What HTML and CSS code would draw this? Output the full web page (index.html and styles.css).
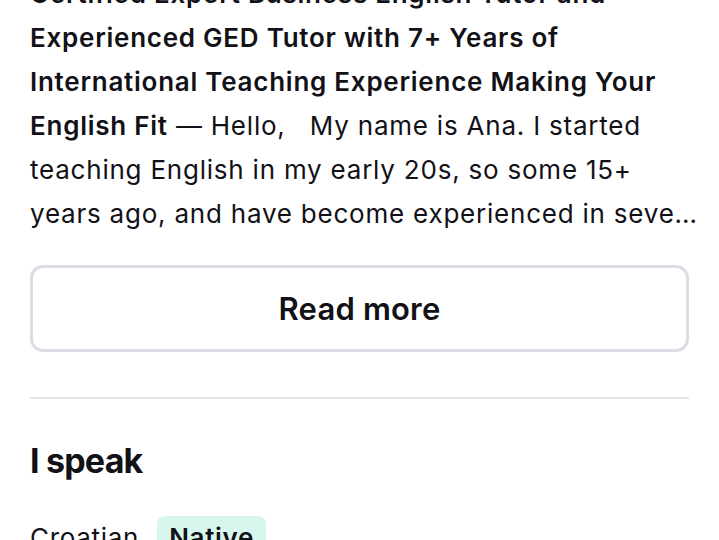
FILE: index.html
```html
<!DOCTYPE html>
<html lang="en">
<head>
<meta charset="utf-8">
<title>Tutor profile</title>
<link rel="stylesheet" href="styles.css">
</head>
<body>
<main class="profile">
  <section class="about">
    <p class="bio"><strong>Certified Expert Business English Tutor and Experienced GED Tutor with 7+ Years of International Teaching Experience Making Your English Fit</strong> — Hello,&nbsp;&nbsp; My name is Ana. I started teaching English in my early 20s, so some 15+ years ago, and have become experienced in seve…</p>
    <button class="read-more" type="button">Read more</button>
  </section>
  <hr class="divider">
  <section class="languages">
    <h2 class="section-title">I speak</h2>
    <ul class="lang-list">
      <li class="lang"><span class="lang-name">Croatian</span><span class="badge">Native</span></li>
    </ul>
  </section>
</main>
</body>
</html>
```
FILE: styles.css
```css
* { box-sizing: border-box; }
html, body { margin: 0; padding: 0; background: #ffffff; }
body {
  font-family: Inter, "Noto Sans", sans-serif;
  color: #121117;
  overflow: hidden;
}
.profile {
  padding: 0 30px;
  margin-top: -28px;
}
.about {
  display: flex;
  flex-direction: column;
}
.bio {
  margin: 0 -14px 0 0;
  font-size: 26px;
  line-height: 44px;
  letter-spacing: 0.78px;
  font-weight: 400;
}
.bio strong {
  font-weight: 600;
  letter-spacing: 0.75px;
}
.read-more {
  margin-top: 29px;
  height: 87px;
  width: 100%;
  background: #ffffff;
  border: 3px solid #dcdce5;
  border-radius: 13px;
  font-family: inherit;
  font-size: 31px;
  font-weight: 600;
  letter-spacing: 0.2px;
  color: #121117;
}
.divider {
  margin: 45px 0 0;
  border: 0;
  height: 2px;
  background: #e4e4e9;
}
.section-title {
  margin: 42px 0 0;
  font-size: 34px;
  line-height: 40px;
  font-weight: 700;
  letter-spacing: -0.8px;
}
.lang-list {
  list-style: none;
  margin: 35px 0 0;
  padding: 0;
}
.lang {
  display: flex;
  align-items: center;
  gap: 18px;
  font-size: 26px;
  line-height: 44px;
  letter-spacing: 0.7px;
}
.badge {
  background: #d7f6ee;
  border-radius: 8px;
  padding: 0 12px;
  font-weight: 600;
}
```
